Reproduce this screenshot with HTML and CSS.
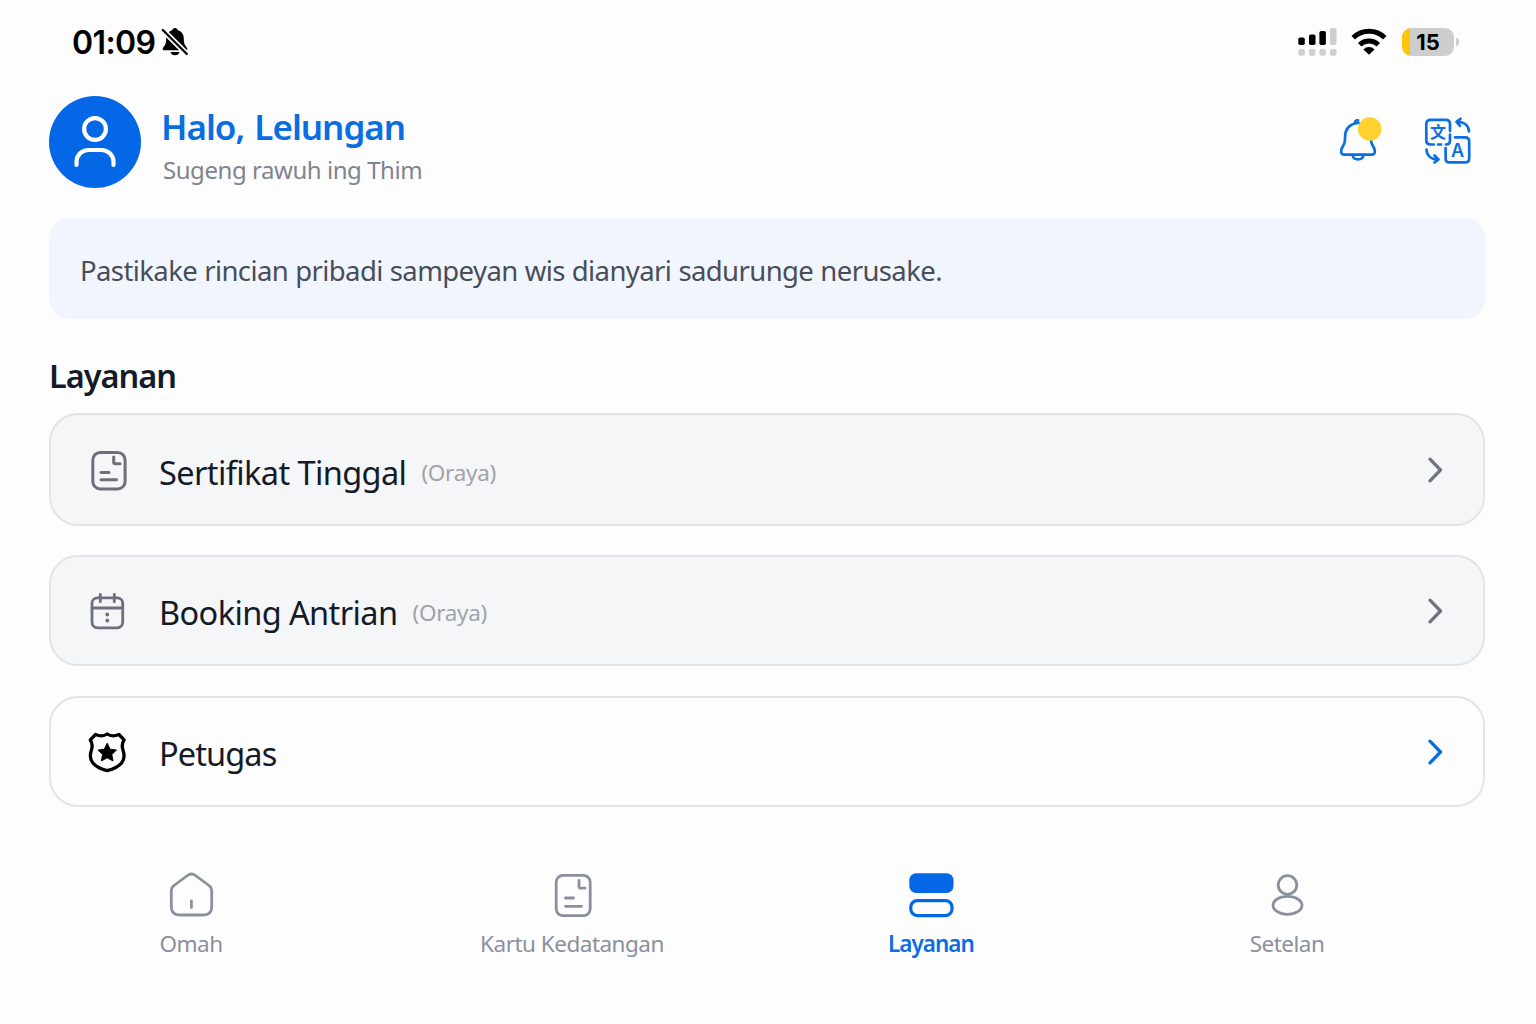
FILE: index.html
```html
<!DOCTYPE html>
<html lang="jv">
<head>
  <meta charset="UTF-8">
  <title>Layanan</title>
  <link rel="stylesheet" href="styles.css">
</head>
<body>
  <div class="status-bar">
    <div class="status-left">
      <span class="time">01:09</span>
      <svg class="muted" width="28" height="30" viewBox="0 0 28 30">
        <path d="M14 1c1.700 0 2.500 1 2.800 2.300 4 1.200 6 4.300 6 8.500 0 5 1.200 6.500 3.200 9.200.8 1.200.3 2.300-1 2.300H3c-1.400 0-1.800-1.200-1-2.300 2-2.700 3.200-4.200 3.200-9.200 0-4.200 2-7.300 6-8.500C11.500 2 12.300 1 14 1z"/>
        <path d="M9.500 25h9c-.5 2-2.200 3.300-4.500 3.300S10 27 9.500 25z"/>
        <path d="M1.800 3L25.800 27" stroke="#fdfdfd" stroke-width="5.600"/>
        <path d="M1.800 3L25.800 27" stroke="#000" stroke-width="2.300" stroke-linecap="round"/>
      </svg>
    </div>
    <div class="status-right">
      <svg class="signal" width="40" height="32" viewBox="0 0 40 32">
        <rect x="0.300" y="11.500" width="6.500" height="7.500" rx="1.800"/>
        <rect x="11" y="8.400" width="6.500" height="10.600" rx="1.800"/>
        <rect x="21.400" y="5" width="6.500" height="14" rx="1.800"/>
        <g fill="#cfcfcf">
          <rect x="32" y="2" width="6.500" height="17" rx="1.800"/>
          <rect x="0.300" y="23" width="6.500" height="6.800" rx="1.800"/>
          <rect x="11" y="23" width="6.500" height="6.800" rx="1.800"/>
          <rect x="21.400" y="23" width="6.500" height="6.800" rx="1.800"/>
          <rect x="32" y="23" width="6.500" height="6.800" rx="1.800"/>
        </g>
      </svg>
      <svg class="wifi" width="36" height="32" viewBox="0 0 36 32">
        <g fill="none" stroke="#000" stroke-width="5">
          <path d="M2.200 11.800a22.500 22.500 0 0 1 31.600 0"/>
          <path d="M8.700 18.800a13.400 13.400 0 0 1 18.600 0"/>
        </g>
        <path d="M18 28.800l-5.600-5.400a7.900 7.900 0 0 1 11.200 0z"/>
      </svg>
      <div class="battery">15</div>
      <div class="battery-tip"></div>
    </div>
  </div>

  <div class="header">
    <div class="avatar">
      <svg width="92" height="92" viewBox="0 0 92 92" fill="none" stroke="#fff" stroke-width="4.200" stroke-linecap="round">
        <circle cx="46" cy="33" r="10.900"/>
        <path d="M27.500 69v-4a12 12 0 0 1 12-11h13a12 12 0 0 1 12 11v4"/>
      </svg>
    </div>
    <div class="greeting">
      <div class="hello">Halo, Lelungan</div>
      <div class="welcome">Sugeng rawuh ing Thim</div>
    </div>
    <div class="actions">
      <svg width="48" height="52" viewBox="0 0 48 52">
        <g fill="none" stroke="#0a6fe0" stroke-width="2.700" stroke-linecap="round" stroke-linejoin="round">
          <path d="M23 11c-8 0-13.300 5-13.800 12-.3 7-.2 8-3.200 13-2 3.500-.8 6.700 3 6.700h26c3.800 0 5-3.200 3-6.700-3-5-3.100-6-3.400-13"/>
          <path d="M18.800 11c.2-2.200 1.500-3 3.200-2.600"/>
          <path d="M16.500 43.500c1.500 5.200 9.500 5.200 11 0"/>
        </g>
        <circle cx="33.700" cy="17" r="11.800" fill="#fdd22f"/>
      </svg>
      <svg class="translate" width="48" height="48" viewBox="0 0 48 48">
        <g fill="none" stroke="#0a6fe0" stroke-width="2.700" stroke-linecap="round" stroke-linejoin="round">
          <path d="M14 28.500H17M26 15V8q0-4.200-4.200-4.200H6.500Q2.300 3.800 2.300 8v16q0 4.500 4.500 4.500h3M26 18.500v6q0 4-4 4"/>
          <path d="M31 21.300h10q4.200 0 4.200 4.200v16.700q0 4.200-4.200 4.200H25.800q-4.200 0-4.200-4.200V32"/>
          <path d="M36.500 2.800l-4 3 3.500 4M33 5.800c7-.3 11.500 3.500 12 9.500"/>
          <path d="M2.500 33.500c.3 6 4.500 10 11.500 10M10.500 39.500l4 4-4 3"/>
        </g>
        <text class="glyph glyph-cjk" x="14" y="21.500">文</text>
        <text class="glyph" x="33.500" y="41.300">A</text>
      </svg>
    </div>
  </div>

  <div class="notice">Pastikake rincian pribadi sampeyan wis dianyari sadurunge nerusake.</div>

  <h2 class="section-title">Layanan</h2>

  <div class="services">
    <div class="card disabled first">
      <svg class="card-icon" width="48" height="48" viewBox="0 0 48 48" fill="none" stroke="#6c707c" stroke-width="3" stroke-linecap="round" stroke-linejoin="round">
        <rect x="9.800" y="6.400" width="32.300" height="36.600" rx="7.500"/>
        <path d="M30.700 11v5q0 1.700 1.700 1.700H37M18 26.500h8M18 33.800h15.500"/>
      </svg>
      <span class="name">Sertifikat Tinggal</span>
      <span class="note">(Oraya)</span>
      <svg class="chevron" width="20" height="32" viewBox="0 0 20 32"><path d="M5 5.200L15.500 16 5 26.800"/></svg>
    </div>
    <div class="card disabled">
      <svg class="card-icon" width="48" height="48" viewBox="0 0 48 48" fill="none" stroke="#6c707c" stroke-width="2.800" stroke-linecap="round">
        <rect x="9" y="10.800" width="30.700" height="30" rx="5.500"/>
        <path d="M17.300 7.300v7.500M31.300 7.300v7.500M9 21h30.700"/>
        <path d="M24.300 27.500v.01M24.300 33.500v.01" stroke-width="3.800"/>
      </svg>
      <span class="name">Booking Antrian</span>
      <span class="note">(Oraya)</span>
      <svg class="chevron" width="20" height="32" viewBox="0 0 20 32"><path d="M5 5.200L15.500 16 5 26.800"/></svg>
    </div>
    <div class="card">
      <svg class="card-icon" width="48" height="48" viewBox="0 0 48 48">
        <path d="M24.200 6c-3.200 2.200-7.500 2.300-11.700.5L7.300 11.800c2.500 3.700 2.500 6.500 1 10.700-3.300 9.500 1.700 16.500 15.900 20.200 14.200-3.700 19.200-10.700 15.900-20.200-1.500-4.200-1.500-7 1-10.700L35.900 6.500c-4.200 1.800-8.500 1.700-11.700-.5z" fill="none" stroke="#000" stroke-width="3.300" stroke-linejoin="round"/>
        <path d="M24.200 15.200l2.900 6 6.300.9-4.600 4.400 1.200 6.400-5.800-3.100-5.800 3.100 1.200-6.400-4.600-4.400 6.300-.9z" stroke="#000" stroke-linejoin="round"/>
      </svg>
      <span class="name name-officer">Petugas</span>
      <svg class="chevron" width="20" height="32" viewBox="0 0 20 32"><path d="M5 5.200L15.500 16 5 26.800"/></svg>
    </div>
  </div>

  <div class="bottom-nav">
    <div class="nav-item">
      <svg width="48" height="48" viewBox="0 0 48 48">
        <path d="M20.500 4.500L7 14.500Q4.300 16.500 4.300 20v15.500q0 8.500 8.500 8.500h23.400q8.500 0 8.500-8.500V20q0-3.500-2.700-5.500L28.500 4.500q-4-3-8 0z"/>
        <path d="M24.400 29.800v6.700"/>
      </svg>
      <span>Omah</span>
    </div>
    <div class="nav-item">
      <svg width="48" height="48" viewBox="0 0 48 48">
        <rect x="8.200" y="4.300" width="34" height="40.400" rx="7"/>
        <path d="M31 9.500v6q0 1.700 1.700 1.700H37M17.500 27h8M17.500 35.300h16"/>
      </svg>
      <span>Kartu Kedatangan</span>
    </div>
    <div class="nav-item active">
      <svg width="48" height="48" viewBox="0 0 48 48">
        <rect x="2.300" y="2.200" width="44.200" height="19.800" rx="7" class="filled"/>
        <rect x="3.800" y="29.600" width="41.200" height="15" rx="6.500"/>
      </svg>
      <span>Layanan</span>
    </div>
    <div class="nav-item">
      <svg width="48" height="48" viewBox="0 0 48 48">
        <circle cx="24.500" cy="14" r="9.300"/>
        <ellipse cx="24.500" cy="34.300" rx="14.500" ry="9"/>
      </svg>
      <span>Setelan</span>
    </div>
  </div>
</body>
</html>
```
FILE: styles.css
```css
* {
  box-sizing: border-box;
}

body {
  margin: 0;
  width: 1536px;
  height: 1024px;
  overflow: hidden;
  background-color: #fdfdfd;
  font-family: "Noto Sans", sans-serif;
  color: #141a28;
}

span,
.notice,
.hello,
.welcome {
  white-space: nowrap;
}

/* status bar */
.status-bar {
  display: flex;
  justify-content: space-between;
  align-items: center;
  height: 84px;
  padding: 0 77px 0 72px;
}

.status-left,
.status-right {
  display: flex;
  align-items: center;
}

.time {
  padding-top: 2px;
  font-family: Inter, sans-serif;
  font-size: 32px;
  font-weight: 600;
  line-height: 40px;
  letter-spacing: -0.6px;
  color: #000;
}

.muted {
  margin-left: 6px;
}

.wifi {
  margin: 0 15px 0 13px;
}

.battery {
  width: 52px;
  height: 28px;
  border-radius: 9px;
  background: linear-gradient(to right, #fdc50b 8px, #cdcdcd 8px);
  font-family: Inter, sans-serif;
  font-size: 22px;
  font-weight: 700;
  line-height: 28px;
  text-align: center;
  color: #000;
}

.battery-tip {
  width: 3px;
  height: 8px;
  margin-left: 2px;
  border-radius: 0 4px 4px 0;
  background-color: #cdcdcd;
}

/* header */
.header {
  display: flex;
  height: 92px;
  margin: 12px 64px 0 49px;
}

.avatar {
  width: 92px;
  height: 92px;
  border-radius: 50%;
  background-color: #0468e6;
}

.greeting {
  flex: 1;
  padding: 8px 0 0 20px;
}

.hello {
  font-size: 35px;
  font-weight: 600;
  line-height: 46px;
  letter-spacing: -1px;
  word-spacing: 2px;
  color: #0a6de2;
}

.welcome {
  margin: 4px 0 0 2px;
  font-size: 24px;
  line-height: 32px;
  letter-spacing: -0.45px;
  color: #80848f;
}

.actions {
  display: flex;
  align-items: flex-start;
  gap: 40px;
  padding-top: 16px;
}

.translate {
  margin-top: 4px;
}

.glyph {
  font-family: Inter, sans-serif;
  font-size: 18px;
  font-weight: 600;
  text-anchor: middle;
  fill: #0a6fe0;
}

.glyph-cjk {
  font-family: "Noto Sans CJK SC", sans-serif;
  font-size: 16px;
  font-weight: 700;
}

/* notice */
.notice {
  height: 101px;
  margin: 30px 51px 0 49px;
  padding-left: 31px;
  border-radius: 20px;
  background-color: #f1f6fe;
  font-size: 27.5px;
  line-height: 105px;
  letter-spacing: -0.6px;
  word-spacing: 0.5px;
  color: #484d59;
}

.section-title {
  height: 94px;
  margin: 0 0 0 49px;
  padding-top: 34px;
  font-size: 32.5px;
  font-weight: 600;
  line-height: 46px;
  letter-spacing: -1px;
}

/* service list */
.services {
  display: flex;
  flex-direction: column;
  gap: 30px;
  margin: 0 51px 0 49px;
}

.card {
  display: flex;
  align-items: center;
  height: 111px;
  padding: 0 38px 0 32px;
  border: 2px solid #e3e4e8;
  border-radius: 29px;
}

.card.first {
  height: 113px;
  margin-bottom: -1px;
}

.card.disabled {
  background-color: #f5f6f8;
}

.card-icon {
  margin-right: 28px;
}

.name {
  padding-top: 4px;
  font-size: 32.5px;
  line-height: 46px;
  letter-spacing: -0.6px;
}

.name-officer {
  letter-spacing: -0.9px;
}

.note {
  margin-left: 15px;
  padding-top: 4px;
  font-size: 22.5px;
  letter-spacing: -0.3px;
  color: #a0a3a9;
}

.first .name,
.first .note {
  padding-top: 6px;
}

.chevron {
  margin-left: auto;
  fill: none;
  stroke: #0a6de2;
  stroke-width: 3.3;
  stroke-linecap: round;
  stroke-linejoin: round;
}

.disabled .chevron {
  stroke: #6f737e;
}

/* bottom navigation */
.bottom-nav {
  display: grid;
  grid-template-columns: 382px 380px 338px 374px;
  margin-top: 64px;
}

.nav-item {
  display: flex;
  flex-direction: column;
  align-items: center;
  font-size: 22.5px;
  line-height: 32px;
  letter-spacing: -0.5px;
  color: #8b90a0;
}

.nav-item svg {
  margin-bottom: 9px;
  fill: none;
  stroke: #8b90a0;
  stroke-width: 2.8;
  stroke-linecap: round;
}

.nav-item.active {
  font-weight: 600;
  letter-spacing: -1px;
  color: #0a6de2;
}

.nav-item.active svg {
  stroke: #0468e6;
  stroke-width: 3.2;
}

.nav-item .filled {
  fill: #0468e6;
  stroke: none;
}
```
